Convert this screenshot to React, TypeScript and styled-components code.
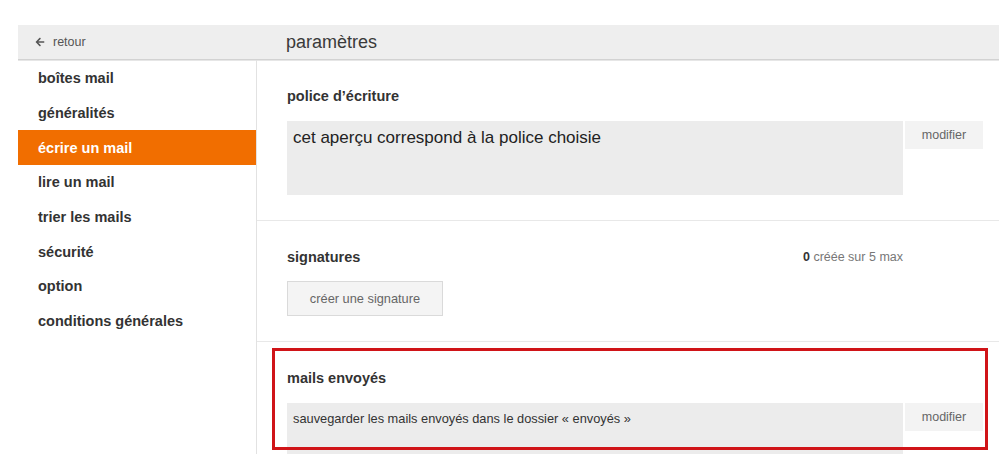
import React from 'react';
import styled, { createGlobalStyle } from 'styled-components';
import { FaArrowLeft } from 'react-icons/fa';

const GlobalStyle = createGlobalStyle`
  html, body {
    margin: 0;
    padding: 0;
    background: #fff;
    font-family: 'Liberation Sans', Arial, sans-serif;
    color: #333;
  }
  * {
    box-sizing: border-box;
  }
`;

const Page = styled.div`
  display: flex;
  flex-direction: column;
  min-height: 100vh;
  padding: 25px 0 0 18px;
  overflow: hidden;
`;

const TopBar = styled.div`
  display: flex;
  align-items: center;
  height: 35px;
  background-color: #eeeeee;
  border-bottom: 1px solid #d2d2d2;
  box-shadow: 0 1px 0 #e6e6e6;
`;

const BackLink = styled.div`
  display: flex;
  align-items: center;
  gap: 8px;
  width: 238px;
  padding-left: 17px;
  font-size: 12.5px;
  color: #555;
`;

const PageTitle = styled.div`
  padding-left: 30px;
  font-size: 18px;
  color: #3a3a3a;
`;

const Body = styled.div`
  display: flex;
  flex: 1;
`;

const Sidebar = styled.nav`
  display: flex;
  flex-direction: column;
  width: 239px;
  padding-top: 1px;
  border-right: 1px solid #e2e2e2;
`;

const NavItem = styled.div<{ $active?: boolean }>`
  display: flex;
  align-items: center;
  height: 34.7px;
  padding-left: 20px;
  font-size: 14.5px;
  font-weight: bold;
  color: ${p => (p.$active ? '#fff' : '#333')};
  background-color: ${p => (p.$active ? '#f16e00' : 'transparent')};
`;

const Content = styled.main`
  flex: 1;
  display: flex;
  flex-direction: column;
`;

const Section = styled.section`
  position: relative;
  padding: 28px 0 25px 30px;
  border-bottom: 1px solid #e8e8e8;
`;

const SectionTitle = styled.div`
  height: 16px;
  line-height: 16px;
  margin-bottom: 17px;
  font-size: 14.5px;
  font-weight: bold;
  color: #333;
`;

const HeadRow = styled.div`
  display: flex;
  justify-content: space-between;
  align-items: center;
  width: 616px;
  margin-bottom: 16px;

  & > ${SectionTitle} {
    margin-bottom: 0;
  }
`;

const Counter = styled.span`
  font-size: 12.5px;
  color: #777;

  b {
    color: #333;
  }
`;

const SettingRow = styled.div`
  display: flex;
  align-items: flex-start;
  gap: 2px;
`;

const Preview = styled.div<{ $big?: boolean }>`
  width: 616px;
  height: ${p => (p.$big ? '74px' : '60px')};
  padding: ${p => (p.$big ? '7px 6px' : '8px 6px')};
  background-color: #ececec;
  font-size: ${p => (p.$big ? '17px' : '12.8px')};
  line-height: ${p => (p.$big ? '20px' : '15px')};
  color: ${p => (p.$big ? '#222' : '#333')};
`;

const ModifyButton = styled.div`
  display: flex;
  justify-content: center;
  align-items: center;
  width: 78px;
  height: 28px;
  background-color: #f3f3f3;
  font-size: 12.5px;
  color: #666;
`;

const CreateButton = styled.div`
  display: flex;
  justify-content: center;
  align-items: center;
  width: 156px;
  height: 35px;
  background-color: #f4f4f4;
  border: 1px solid #dadada;
  font-size: 12.8px;
  color: #666;
`;

const Highlight = styled.div`
  position: absolute;
  top: 6px;
  left: 15px;
  width: 716px;
  height: 102px;
  border: 3px solid #d01418;
  pointer-events: none;
`;

const navItems = [
  'boîtes mail',
  'généralités',
  'écrire un mail',
  'lire un mail',
  'trier les mails',
  'sécurité',
  'option',
  'conditions générales',
];

export default function App(): JSX.Element {
  return (
    <>
      <GlobalStyle />
      <Page>
        <TopBar>
          <BackLink>
            <FaArrowLeft size={10} color="#555" />
            retour
          </BackLink>
          <PageTitle>paramètres</PageTitle>
        </TopBar>
        <Body>
          <Sidebar>
            {navItems.map(item => (
              <NavItem key={item} $active={item === 'écrire un mail'}>
                {item}
              </NavItem>
            ))}
          </Sidebar>
          <Content>
            <Section>
              <SectionTitle>police d’écriture</SectionTitle>
              <SettingRow>
                <Preview $big>cet aperçu correspond à la police choisie</Preview>
                <ModifyButton>modifier</ModifyButton>
              </SettingRow>
            </Section>
            <Section>
              <HeadRow>
                <SectionTitle>signatures</SectionTitle>
                <Counter>
                  <b>0</b> créée sur 5 max
                </Counter>
              </HeadRow>
              <CreateButton>créer une signature</CreateButton>
            </Section>
            <Section>
              <Highlight />
              <SectionTitle>mails envoyés</SectionTitle>
              <SettingRow>
                <Preview>sauvegarder les mails envoyés dans le dossier « envoyés »</Preview>
                <ModifyButton>modifier</ModifyButton>
              </SettingRow>
            </Section>
          </Content>
        </Body>
      </Page>
    </>
  );
}
